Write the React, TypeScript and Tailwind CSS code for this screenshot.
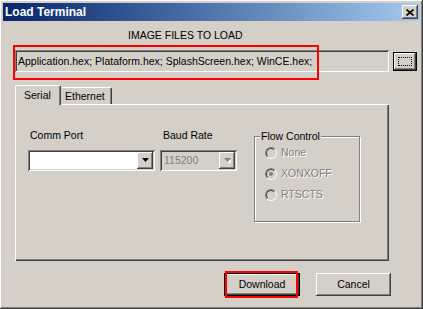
import React from 'react';

const raised =
  'shadow-[inset_-1px_-1px_0_#404040,inset_1px_1px_0_#ffffff,inset_-2px_-2px_0_#808080,inset_2px_2px_0_#d4d0c8]';
const sunken =
  'shadow-[inset_1px_1px_0_#808080,inset_-1px_-1px_0_#ffffff,inset_2px_2px_0_#404040,inset_-2px_-2px_0_#d4d0c8]';
const disabledText = 'text-[#808080] [text-shadow:1px_1px_0_#ffffff]';

function Arrow({ disabled }: { disabled?: boolean }) {
  return (
    <svg width="7" height="5" viewBox="0 0 7 5">
      {disabled && <path d="M2 2h7l-3.5 4z" fill="#ffffff" />}
      <path d="M0 0h7l-3.5 4z" fill={disabled ? '#808080' : '#000000'} />
    </svg>
  );
}

function Combo({ width, value, disabled }: { width: string; value?: string; disabled?: boolean }) {
  return (
    <div
      className={`${width} h-[21px] mt-[8px] flex items-center justify-between p-[2px] ${sunken} ${
        disabled ? 'bg-[#d4d0c8]' : 'bg-white'
      }`}
    >
      <span className={`pl-[2px] ${disabled ? 'text-[#808080]' : 'text-black'}`}>{value}</span>
      <div className={`w-[16px] h-[17px] bg-[#d4d0c8] flex items-center justify-center ${raised}`}>
        <Arrow disabled={disabled} />
      </div>
    </div>
  );
}

function Radio({ label, checked }: { label: string; checked?: boolean }) {
  return (
    <div className="h-[21px] flex items-center">
      <div className="ml-[10px] w-[12px] h-[12px] rounded-full border border-t-[#808080] border-l-[#808080] border-r-white border-b-white flex">
        <div className="flex-1 rounded-full border border-t-[#404040] border-l-[#404040] border-r-[#d4d0c8] border-b-[#d4d0c8] bg-[#d4d0c8] flex items-center justify-center">
          {checked && <div className="w-[4px] h-[4px] rounded-full bg-[#808080]" />}
        </div>
      </div>
      <span className={`ml-[4px] ${disabledText}`}>{label}</span>
    </div>
  );
}

export default function App() {
  return (
    <div
      className={`relative w-[423px] h-[309px] bg-[#d4d0c8] p-[3px] flex flex-col text-[10.5px] leading-[13px] text-black font-['Liberation_Sans',Arial,sans-serif] ${raised}`}
    >
      {/* Title bar */}
      <div className="h-[18px] flex items-center justify-between bg-linear-to-r from-[#0a246a] to-[#a6caf0] pl-[2px] pr-[2px]">
        <span className="text-white font-bold text-[12px]">Load Terminal</span>
        <div className={`w-[16px] h-[14px] bg-[#d4d0c8] flex items-center justify-center ${raised}`}>
          <svg width="8" height="7" viewBox="0 0 8 7">
            <path d="M0.5 0.5l7 6M7.5 0.5l-7 6" stroke="#000" strokeWidth="1.6" />
          </svg>
        </div>
      </div>

      {/* Content */}
      <div className="flex flex-col">
        <div className="mt-[8px] pl-[125px] h-[13px]">IMAGE FILES TO LOAD</div>

        <div className="mt-[8px] flex items-start">
          <div className={`ml-[12px] w-[374px] h-[22px] flex items-center pl-[3px] ${sunken}`}>
            Application.hex; Plataform.hex; SplashScreen.hex; WinCE.hex;
          </div>
          <div className="ml-[4px] mt-[2px] w-[24px] h-[19px] border border-black flex">
            <div className={`flex-1 bg-[#d4d0c8] flex items-center justify-center ${raised}`}>
              <div className="w-[14px] h-[9px] border border-dotted border-black" />
            </div>
          </div>
        </div>

        {/* Tabs */}
        <div className="mt-[13px] ml-[12px] flex items-end h-[19px]">
          <div className="relative z-10 w-[46px] h-[20px] mb-[-1px] bg-[#d4d0c8] border-l border-t border-white border-r border-r-[#404040] rounded-t-[2px] shadow-[inset_-1px_0_0_#808080] pl-[8px] pt-[3px]">
            Serial
          </div>
          <div className="w-[51px] h-[17px] bg-[#d4d0c8] border-t border-white border-r border-r-[#404040] rounded-t-[2px] shadow-[inset_-1px_0_0_#808080] pl-[4px] pt-[2px]">
            Ethernet
          </div>
        </div>

        {/* Panel */}
        <div className="ml-[12px] w-[374px] h-[157px] shadow-[inset_1px_1px_0_#ffffff,inset_-1px_-1px_0_#404040,inset_-2px_-2px_0_#808080]">
          <div className="flex items-start pt-[25px] pl-[13px]">
            <div className="w-[127px]">
              <div className="pl-[2px] h-[13px]">Comm Port</div>
              <Combo width="w-[127px]" />
            </div>
            <div className="ml-[5px] w-[77px]">
              <div className="pl-[3px] h-[13px]">Baud Rate</div>
              <Combo width="w-[77px]" value="115200" disabled />
            </div>
            <div className="relative ml-[17px] mt-[7px] w-[106px] h-[86px] border border-[#808080] shadow-[inset_1px_1px_0_#ffffff,1px_1px_0_#ffffff]">
              <span className="absolute -top-[7px] left-[5px] bg-[#d4d0c8] px-[1px]">Flow Control</span>
              <div className="pt-[5px] flex flex-col">
                <Radio label="None" />
                <Radio label="XONXOFF" checked />
                <Radio label="RTSCTS" />
              </div>
            </div>
          </div>
        </div>

        {/* Buttons */}
        <div className="mt-[12px] pl-[221px] flex gap-[16px]">
          <div className="w-[76px] h-[23px] border border-black flex">
            <div className={`flex-1 bg-[#d4d0c8] flex items-center justify-center ${raised}`}>Download</div>
          </div>
          <div className={`w-[75px] h-[23px] bg-[#d4d0c8] flex items-center justify-center ${raised}`}>Cancel</div>
        </div>
      </div>

      {/* Red annotation boxes */}
      <div className="absolute left-[13px] top-[45px] w-[306px] h-[35px] border-2 border-[#ff0000]" />
      <div className="absolute left-[225px] top-[271px] w-[73px] h-[27px] border-2 border-[#ff0000]" />
    </div>
  );
}
